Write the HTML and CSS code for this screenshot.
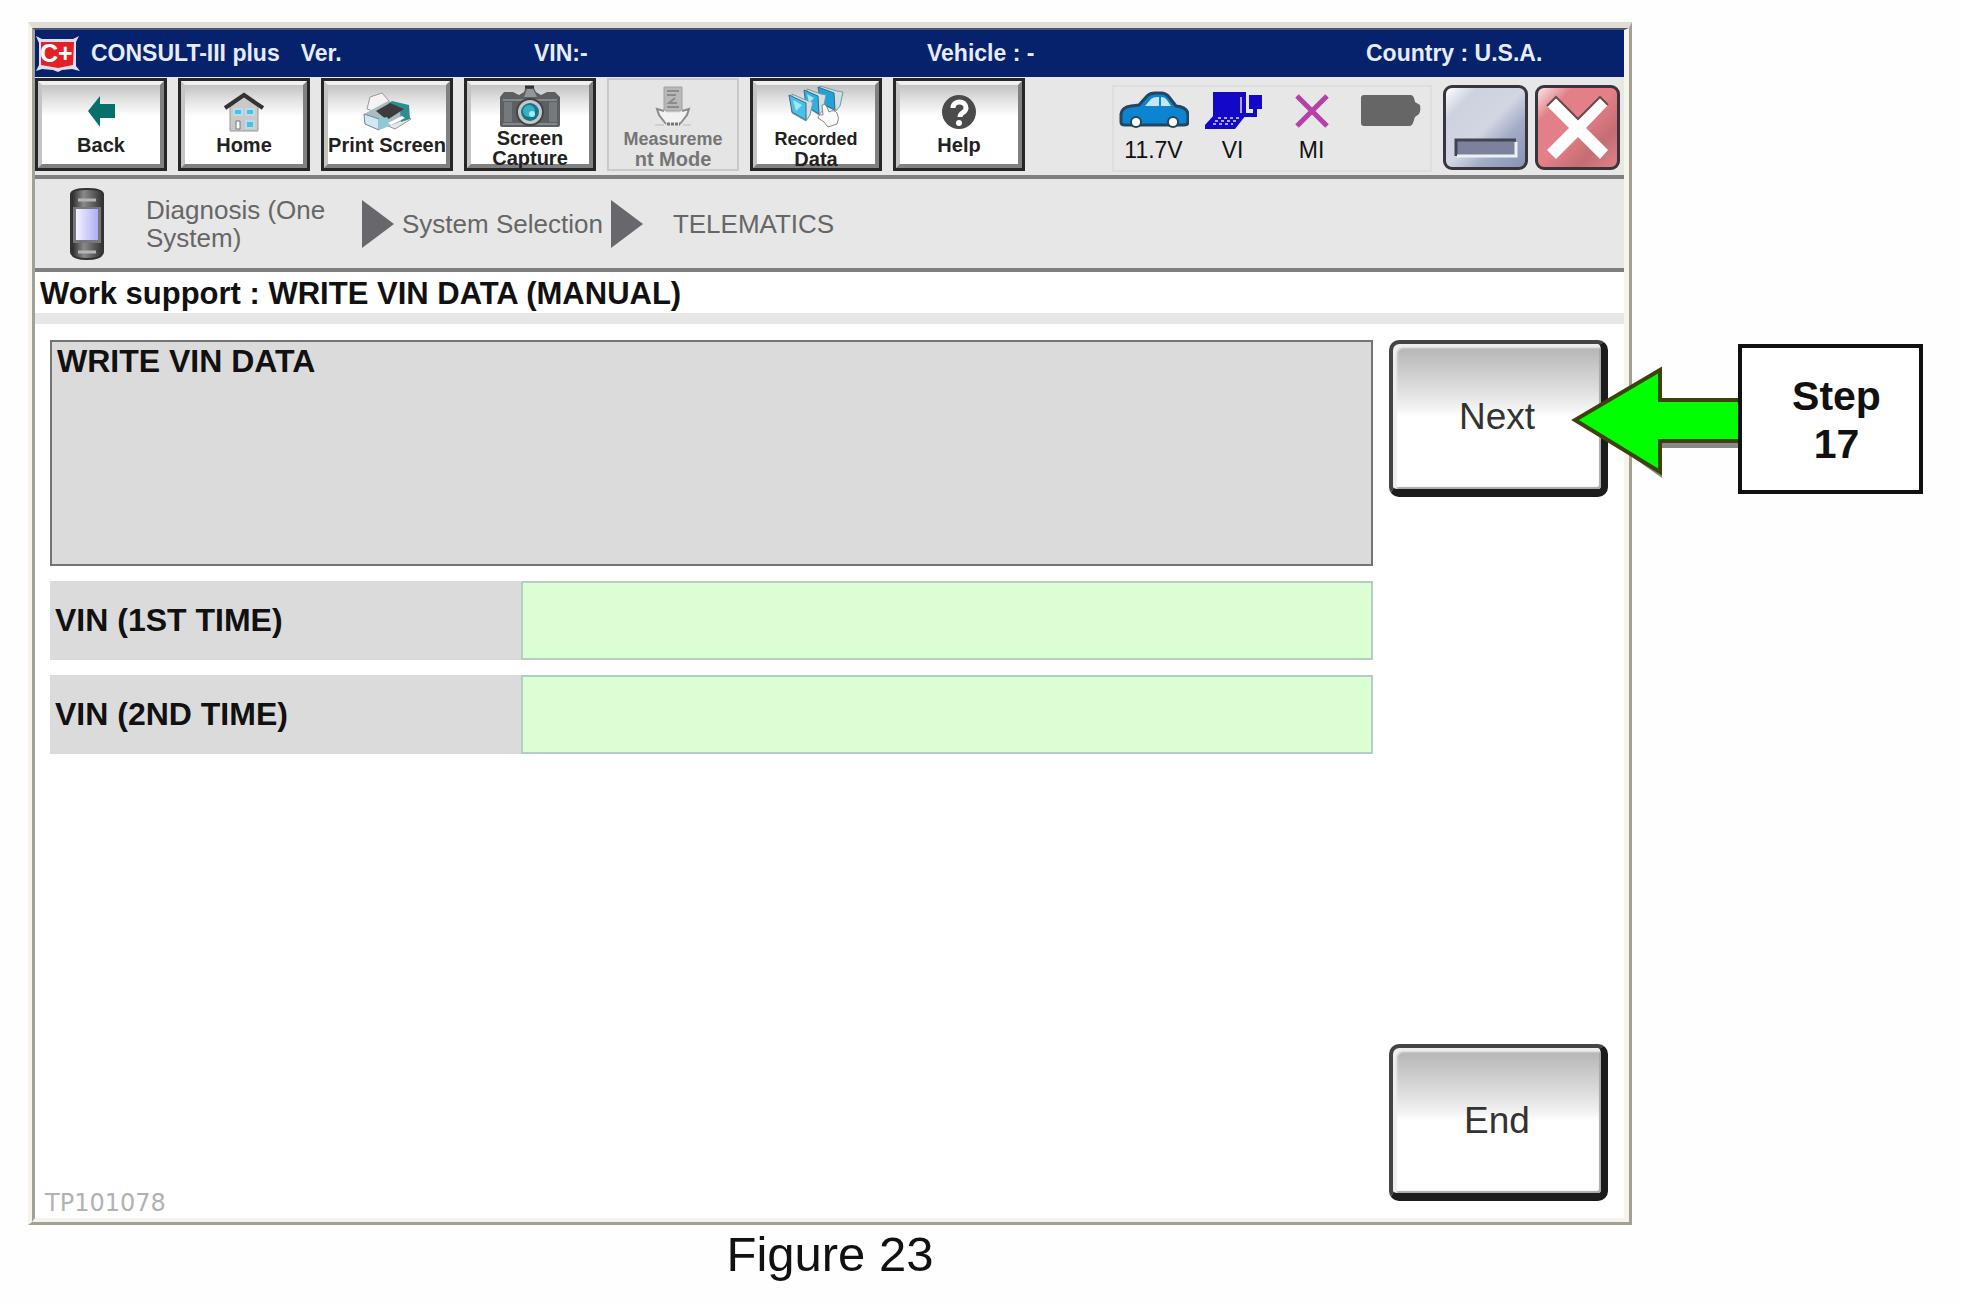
FILE: index.html
```
<!DOCTYPE html>
<html lang="en">
<head>
    <meta charset="UTF-8">
    <meta name="viewport" content="width=device-width, initial-scale=1.0">
    <title>CONSULT-III plus - Write VIN Data</title>
    <link rel="stylesheet" href="styles.css">
</head>
<body>
    <div class="figure">
        <div class="window">
            <div class="screen">
                <!-- Title bar -->
                <header class="title-bar">
                    <div class="app-name">
                        <svg class="app-logo" viewBox="0 0 45 38">
                            <path d="M1 1l6 3h31l6-3-3 6v24l4 5-8-2-10 1-4 2-5-2-11-1-6 2 3-6V8z" fill="#e4dcec"/>
                            <path d="M6 7h33l-1 23-15 3-17-3z" fill="#e02226"/>
                            <text x="5" y="27" class="logo-text">C+</text>
                        </svg>
                        <span>CONSULT-III plus</span>
                        <span class="version">Ver.</span>
                    </div>
                    <div>VIN:-</div>
                    <div>Vehicle : -</div>
                    <div>Country : U.S.A.</div>
                </header>

                <!-- Toolbar -->
                <div class="toolbar">
                    <nav class="tools">
                        <button type="button" class="tool">
                            <svg width="40" height="40" viewBox="0 0 40 40"><path d="M7 19L19 4v8h15v14H19v9z" fill="#08706a"/></svg>
                            <span>Back</span>
                        </button>
                        <button type="button" class="tool">
                            <svg width="42" height="40" viewBox="0 0 42 40">
                                <path d="M7 15L21 4l14 11v24H7z" fill="#c9c9c9" stroke="#999"/>
                                <path d="M2 16L21 3l19 13" fill="none" stroke="#333" stroke-width="4"/>
                                <path d="M11 17h8v6h-8zM23 17h8v6h-8zM23 29h8v7h-8z" fill="#4cc0e4" stroke="#b8dce8" stroke-width="2"/>
                                <path d="M13 29h4v8h-4z" fill="#fff" stroke="#777"/>
                            </svg>
                            <span>Home</span>
                        </button>
                        <button type="button" class="tool">
                            <svg width="50" height="40" viewBox="0 0 50 40">
                                <path d="M26 34l18-11 5 4-16 10z" fill="#e8e8e8" stroke="#999"/>
                                <path d="M5 17L8 5l12-4 8 9-14 10z" fill="#f4f4f4" stroke="#999"/>
                                <path d="M2 22l24-13 21 6-1 12-29 11L3 32z" fill="#a9bcc2"/>
                                <path d="M30 9l17 4 1 14-9 3-1-13-12-5z" fill="#2e8d93"/>
                                <path d="M14 19l14-8 14 6-17 11z" fill="#3c3c3c"/>
                                <path d="M2 22l15 5v11L3 32z" fill="#cfe9f2" stroke="#789"/>
                                <path d="M17 27l8-2 5 7-13 6z" fill="#8fc9d6"/>
                                <path d="M26 31l14-7 3 2-14 7z" fill="#fff"/>
                            </svg>
                            <span>Print Screen</span>
                        </button>
                        <button type="button" class="tool tall">
                            <svg width="62" height="43" viewBox="0 0 62 43">
                                <path d="M1 12l4-5h9l6 3 5-3 2-6h7l3 6 5 3 6-3h8l5 5v28q0 2-2 2H3q-2 0-2-2z" fill="#5d6062"/>
                                <path d="M4 15h54M4 39h54" stroke="#85888a" stroke-width="2"/>
                                <path d="M5 17h8v20H5zM50 17h8v20h-8z" fill="#76797b"/>
                                <path d="M25 12l3-8h6l4 8z" fill="#94979a"/>
                                <circle cx="31" cy="27" r="13" fill="#c3c9cb" stroke="#444" stroke-width="2"/>
                                <circle cx="31" cy="27" r="9" fill="#16768c"/>
                                <circle cx="30" cy="26" r="6" fill="#37b0c4"/>
                                <circle cx="33" cy="29" r="3" fill="#a4ecf2"/>
                                <path d="M26 2h9" stroke="#333" stroke-width="3"/>
                            </svg>
                            <span>Screen<br>Capture</span>
                        </button>
                        <button type="button" class="tool tall" disabled>
                            <svg width="42" height="43" viewBox="0 0 42 43">
                                <path d="M12 2h18v24H12z" fill="#b8b8b8" stroke="#a0a0a0"/>
                                <path d="M15 6h12M15 10h9M23 13l-6 5h8M15 22h12" fill="none" stroke="#8c8c8c" stroke-width="2"/>
                                <path d="M6 25h6l3 3h12l3-3h6l-8 14H14z" fill="#f2f2f2"/>
                                <path d="M12 26l-7-2 2 6 7 9M30 26l7-2-2 6-7 9" fill="none" stroke="#8c8c8c" stroke-width="2"/>
                                <path d="M15 39h13" stroke="#777" stroke-width="3" stroke-dasharray="3 1"/>
                                <path d="M3 40h9M31 40h8" stroke="#bbb"/>
                            </svg>
                            <span><span class="narrow">Measureme</span><br>nt Mode</span>
                        </button>
                        <button type="button" class="tool tall">
                            <svg width="58" height="43" viewBox="0 0 58 43">
                                <path d="M33 1l17 5 6 1-3 14-4 5-14-7z" fill="#cfdfe4" stroke="#7a97a2"/>
                                <path d="M31 2l16 6 1 17-14-7z" fill="#22a2da" stroke="#3a6a80"/>
                                <path d="M20 4l14 5 5 1-3 15-4 5-12-8z" fill="#cfdfe4" stroke="#7a97a2"/>
                                <path d="M17 5l14 6 1 18-13-8z" fill="#2fb0e2" stroke="#3a6a80"/>
                                <path d="M5 9l16 7 5 1-3 13-4 6-14-8z" fill="#cfdfe4" stroke="#7a97a2"/>
                                <path d="M2 10l17 8v17L5 27z" fill="#48c0ea" stroke="#3a6a80"/>
                                <path d="M6 15l9 5-6 6zM20 9l7 4-5 5z" fill="#a2e4f6"/>
                                <path d="M35 20q3-2 5 2l2 5q5-3 8 1 3 5 0 11l-9 3-4-5-6-4q0-4 5-3z" fill="#fafafa" stroke="#888"/>
                            </svg>
                            <span><span class="narrow">Recorded</span><br>Data</span>
                        </button>
                        <button type="button" class="tool">
                            <svg width="40" height="40" viewBox="0 0 40 40">
                                <circle cx="20" cy="20" r="17" fill="#4b4b4b"/>
                                <path d="M14 16c0-8 13-8 13 0 0 5-6 4-6 9" fill="none" stroke="#fff" stroke-width="5"/>
                                <circle cx="20" cy="31" r="3" fill="#fff"/>
                            </svg>
                            <span>Help</span>
                        </button>
                    </nav>

                    <div class="toolbar-end">
                        <div class="status">
                            <div class="status-item">
                                <svg width="70" height="40" viewBox="0 0 70 40">
                                    <path d="M2 31v-8q1-7 10-8l8-1L28 5q3-3 8-3h6q5 0 8 4l7 9q11 1 12 8v8q0 3-4 3H6q-4 0-4-3z" fill="#0c84d0" stroke="#23465e" stroke-width="3"/>
                                    <path d="M26 15l6-7q2-2 7-2h1v9zM42 6q4 0 6 3l4 6H42z" fill="#c4e6f6"/>
                                    <circle cx="17" cy="31" r="6" fill="#23465e"/><circle cx="54" cy="31" r="6" fill="#23465e"/>
                                    <circle cx="17" cy="31" r="4" fill="#fff"/><circle cx="54" cy="31" r="4" fill="#fff"/>
                                </svg>
                                <span>11.7V</span>
                            </div>
                            <div class="status-item">
                                <svg width="58" height="40" viewBox="0 0 58 40">
                                    <path d="M9 1h33v24H9zM10 24h32L31 38H1V34z" fill="#1408c8"/>
                                    <path d="M45 4h13v14H45z" fill="#1408c8"/>
                                    <path d="M51 17v7H40" fill="none" stroke="#1408c8" stroke-width="4"/>
                                    <path d="M37 6v16" stroke="#a9a5ee" stroke-width="2"/>
                                    <path d="M14 27h21M11 30h21M9 33h20" stroke="#a9a5ee" stroke-width="2" stroke-dasharray="3 3"/>
                                </svg>
                                <span>VI</span>
                            </div>
                            <div class="status-item">
                                <svg width="36" height="40" viewBox="0 0 36 40"><path d="M3 5l30 30M33 5L3 35" stroke="#b441a8" stroke-width="5"/></svg>
                                <span>MI</span>
                            </div>
                            <div class="status-item">
                                <svg width="62" height="40" viewBox="0 0 62 40"><path d="M4 4h47q2 0 3 3l1 4 5 3q1 6-1 9l-4 3-2 6q-1 3-3 3H4q-3 0-3-3V7q0-3 3-3z" fill="#666"/></svg>
                            </div>
                        </div>
                        <button type="button" class="win-btn minimize" aria-label="Minimize">
                            <svg width="79" height="79" viewBox="0 0 79 79">
                                <path d="M9 51h61v17H9z" fill="#7c829e"/>
                                <path d="M10 68V52h60" fill="none" stroke="#42454f" stroke-width="3"/>
                                <path d="M11 68h59V54" fill="none" stroke="#eef0f6" stroke-width="3"/>
                            </svg>
                        </button>
                        <button type="button" class="win-btn close" aria-label="Close">
                            <svg width="79" height="79" viewBox="0 0 79 79">
                                <path d="M18 9l22 22L62 9l8 8-22 23 22 22-8 9-22-22-22 22-9-9 22-22L9 18z" fill="#fff"/>
                                <path d="M9 18l9-9 22 22L62 9l8 8" fill="none" stroke="#6c4a4c" stroke-width="2"/>
                            </svg>
                        </button>
                    </div>
                </div>

                <!-- Breadcrumb -->
                <nav class="breadcrumb">
                    <svg class="device" width="34" height="72" viewBox="0 0 34 72">
                        <defs>
                            <linearGradient id="body" x2="1"><stop stop-color="#242424"/><stop offset=".4" stop-color="#8a8a8a"/><stop offset="1" stop-color="#303030"/></linearGradient>
                            <linearGradient id="lcd" x2="1"><stop stop-color="#f2f2ff"/><stop offset="1" stop-color="#b0aef6"/></linearGradient>
                        </defs>
                        <path d="M1 6q1-5 16-5t16 5v58q-1 7-16 7T1 64z" fill="url(#body)" stroke="#333" stroke-width="2"/>
                        <path d="M3 19h28v36H3z" fill="#777"/>
                        <path d="M6 21h22v31H6z" fill="url(#lcd)"/>
                        <path d="M8 12h18M8 64h18" stroke="#b5b5b5" stroke-width="3"/>
                    </svg>
                    <span class="crumb crumb-first">Diagnosis (One System)</span>
                    <svg width="32" height="48" viewBox="0 0 32 48"><path d="M0 0l32 24L0 48z" fill="#68686c"/></svg>
                    <span class="crumb">System Selection</span>
                    <svg width="32" height="48" viewBox="0 0 32 48"><path d="M0 0l32 24L0 48z" fill="#68686c"/></svg>
                    <span class="crumb crumb-last">TELEMATICS</span>
                </nav>

                <h1 class="page-title">Work support : WRITE VIN DATA (MANUAL)</h1>

                <!-- Work area -->
                <main class="work">
                    <div class="work-left">
                        <form class="vin-form" id="vinForm">
                            <div class="message">WRITE VIN DATA</div>
                            <div class="vin-row">
                                <label for="vin1">VIN (1ST TIME)</label>
                                <input type="text" id="vin1">
                            </div>
                            <div class="vin-row">
                                <label for="vin2">VIN (2ND TIME)</label>
                                <input type="text" id="vin2">
                            </div>
                        </form>
                        <div class="code">TP101078</div>
                    </div>
                    <div class="actions">
                        <button type="submit" form="vinForm" class="action">Next</button>
                        <button type="button" class="action">End</button>
                    </div>
                </main>
            </div>
        </div>

        <!-- Callout pointing at Next -->
        <aside class="callout">
            <svg width="167" height="120" viewBox="0 0 167 120">
                <path d="M91 80h76v9H91zM91 90v29L40 83z" fill="#888"/>
                <path d="M171 41H89V11L4 61l85 52V82h82z" fill="#0f0" stroke="#3f4208" stroke-width="4"/>
            </svg>
            <div class="step">Step<br>17</div>
        </aside>
    </div>
    <p class="caption">Figure 23</p>
</body>
</html>
```
FILE: styles.css
```
:root {
    --navy: #06226c;
    --panel: #e7e7e7;
    --line: #7f7f7f;
    --frame: #a3a196;
    --cream: #f6f4ea;
}

* {
    margin: 0;
    padding: 0;
    box-sizing: border-box;
    font-family: "Liberation Sans", Arial, sans-serif;
}

body {
    min-height: 100vh;
    display: flex;
    flex-direction: column;
    background: #fefefe;
    color: #111;
    padding: 22px 38px 0 28px;
}

svg {
    display: block;
    flex-shrink: 0;
}

.figure {
    flex: 1;
    display: grid;
    grid-template-columns: minmax(0, 1fr) 291px;
}

/* Window frame */
.window {
    display: flex;
    border-style: solid;
    border-width: 6px 3px 3px 4px;
    border-color: #e0dcd6 var(--frame) var(--frame) var(--cream);
}

.screen {
    flex: 1;
    display: flex;
    flex-direction: column;
    border-style: solid;
    border-width: 2px 5px 4px 3px;
    border-color: #4a5470 var(--cream) var(--cream) var(--frame);
    background: #fff;
}

.title-bar {
    display: grid;
    grid-template-columns: 499fr 393fr 439fr 258fr;
    align-items: center;
    height: 47px;
    background: var(--navy);
    color: #e6ecfa;
    font-size: 23px;
    font-weight: bold;
    white-space: nowrap;
}

.app-name {
    display: flex;
    align-items: center;
    gap: 11px;
}

.app-logo {
    width: 45px;
    height: 38px;
}

.logo-text {
    font-size: 25px;
    font-weight: bold;
    fill: #fff;
}

.version {
    margin-left: 10px;
}

/* Toolbar */
.toolbar {
    display: flex;
    justify-content: space-between;
    padding: 1px 4px 3px 0;
    background: var(--panel);
    border-bottom: 4px solid var(--line);
}

.tools {
    display: flex;
    gap: 17px;
    padding: 3px;
}

.tool {
    display: flex;
    flex-direction: column;
    align-items: center;
    gap: 3px;
    width: 126px;
    height: 87px;
    padding-top: 7px;
    border: 4px solid;
    border-color: #f0f0f0 #808080 #808080 #c4c4c4;
    background: linear-gradient(#c2c2c2, #e4e4e4 20%, #fff 40%);
    box-shadow: 0 0 0 3px #262626;
    color: #222;
    font-size: 20px;
    font-weight: bold;
    line-height: 21px;
    white-space: nowrap;
}

.tool.tall {
    gap: 0;
    padding-top: 0;
    line-height: 20px;
}

.tool:disabled {
    border-color: #e5e5e5;
    background: #e5e5e5;
    box-shadow: 0 0 0 1px #e5e5e5, 0 0 0 3px #c9c9c9;
    color: #757575;
}

.narrow {
    font-size: 18px;
}

.toolbar-end {
    display: flex;
    gap: 7px;
    padding-top: 7px;
}

.status {
    display: grid;
    grid-template-columns: repeat(4, 79px);
    height: 87px;
    margin-right: 4px;
    border: 2px solid #dedede;
}

.status-item {
    display: flex;
    flex-direction: column;
    align-items: center;
    gap: 6px;
    padding-top: 4px;
    font-size: 23px;
    line-height: 26px;
}

.win-btn {
    width: 85px;
    height: 85px;
    border: 3px solid #3a343e;
    border-radius: 9px;
}

.minimize {
    background: linear-gradient(135deg, #fff, #cdd2de 20%, #d2d6e2 50%, #a2acc6 70%, #8892b4);
}

.close {
    background: linear-gradient(135deg, #fbe4e4, #e28087 22%, #e47f86 50%, #c46d73 75%, #e08289);
}

/* Breadcrumb */
.breadcrumb {
    display: flex;
    align-items: center;
    height: 93px;
    padding-left: 35px;
    background: var(--panel);
    border-bottom: 4px solid var(--line);
    color: #666;
    font-size: 26px;
    line-height: 28px;
}

.crumb {
    margin: 0 8px;
    white-space: nowrap;
}

.crumb-first {
    width: 208px;
    margin: 0 8px 0 42px;
    white-space: normal;
}

.crumb-last {
    margin-left: 30px;
}

.page-title {
    padding: 5px 5px 2px;
    border-bottom: 11px solid var(--panel);
    font-size: 31px;
    line-height: 34px;
}

/* Work area */
.work {
    flex: 1;
    display: grid;
    grid-template-columns: minmax(0, 1fr) 219px;
    gap: 16px;
    padding: 16px 16px 0 10px;
}

.work-left {
    display: flex;
    flex-direction: column;
    justify-content: space-between;
}

.vin-form {
    display: flex;
    flex-direction: column;
    gap: 15px;
    padding-left: 5px;
    font-size: 32px;
    font-weight: bold;
}

.message {
    min-height: 226px;
    padding: 1px 5px;
    border: 2px solid #747474;
    background: #dbdbdb;
    line-height: 36px;
}

.vin-row {
    display: grid;
    grid-template-columns: 471fr 852fr;
    height: 79px;
}

.vin-row label {
    display: flex;
    align-items: center;
    padding-left: 5px;
    background: #dbdbdb;
}

.vin-row input {
    min-width: 0;
    padding: 0 10px;
    border: 2px solid #b4cfc2;
    background: #dcfed4;
    font-size: 32px;
}

.code {
    color: #b2b2b2;
    font-family: "DejaVu Sans", Verdana, sans-serif;
    font-size: 24px;
    line-height: 30px;
}

.actions {
    display: flex;
    flex-direction: column;
    justify-content: space-between;
    padding-bottom: 17px;
}

.action {
    height: 157px;
    border-style: solid;
    border-width: 4px 7px 8px 4px;
    border-color: #444 #1c1c1c #1c1c1c #444;
    border-radius: 10px;
    background: linear-gradient(#b2b2b2, #dcdcdc 30%, #f2f2f2 44%, #fff 50%);
    box-shadow: inset 4px 4px 2px #eee, inset -2px -2px 1px #aaa;
    color: #333;
    font-size: 37px;
}

/* Callout */
.callout {
    z-index: 1;
    display: flex;
    align-items: center;
    align-self: start;
    margin: 322px 0 0 -61px;
}

.step {
    flex: 1;
    padding: 24px 0 22px 12px;
    border: 4px solid #111;
    background: #fff;
    text-align: center;
    font-size: 41px;
    font-weight: bold;
    line-height: 48px;
}

.caption {
    width: calc(100% - 291px);
    height: 80px;
    text-align: center;
    font-size: 49px;
    line-height: 58px;
}
```
